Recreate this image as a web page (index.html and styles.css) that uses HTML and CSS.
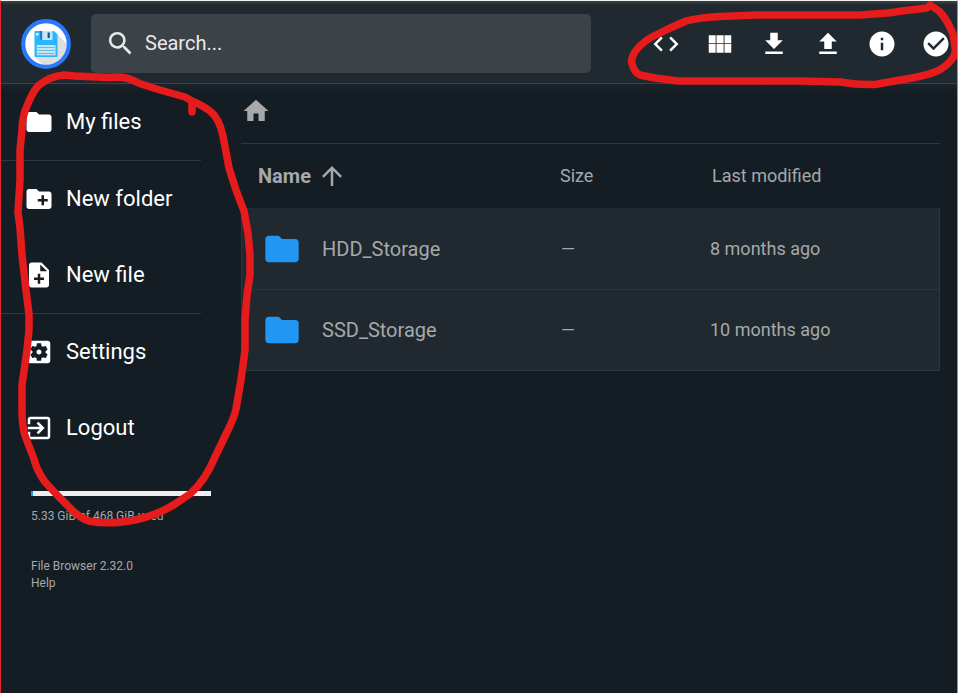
FILE: index.html
```html
<!DOCTYPE html>
<html lang="en">
<head>
<meta charset="utf-8">
<title>File Browser</title>
<link rel="stylesheet" href="styles.css">
</head>
<body>
<div class="app">
  <header class="header">
    <svg class="logo" viewBox="0 0 50 50">
      <circle cx="25" cy="25" r="23" fill="#fff"/>
      <path d="M36 15 L46 25 A21 21 0 0 1 21 45.500 L14 38 Z" fill="#dedede"/>
      <circle cx="25" cy="25" r="22.800" fill="none" stroke="#2979ff" stroke-width="4.200"/>
      <path d="M14.500 12h18.500l3.500 3.500v21.500a1 1 0 0 1-1 1h-21a1 1 0 0 1-1-1v-24a1 1 0 0 1 1-1z" fill="#29b6ff"/>
      <path d="M19 12h12.500v8a1 1 0 0 1-1 1H20a1 1 0 0 1-1-1z" fill="#c4e6f5"/>
      <path d="M19 12h2.200v9H20a1 1 0 0 1-1-1z" fill="#1583c4"/>
      <path d="M26.600 13.500h2.200v5.500h-2.200z" fill="#0d5c91"/>
      <path d="M15 14h2.500v2.500H15z" fill="#e8faff"/>
      <path d="M15.800 26h18.700v10.300H15.800z" fill="#c4e6f5"/>
      <path d="M16.500 28.500h17M16.500 31.500h17M16.500 34.500h17" stroke="#6cb8de"/>
    </svg>
    <div class="search">
      <svg class="icon" viewBox="0 0 24 24"><path d="M15.500 14h-.79l-.28-.27A6.471 6.471 0 0 0 16 9.500 6.500 6.500 0 1 0 9.500 16c1.610 0 3.090-.59 4.230-1.570l.27.28v.79l5 4.990L20.490 19l-4.990-5zm-6 0C7.010 14 5 11.990 5 9.500S7.010 5 9.500 5 14 7.010 14 9.500 11.990 14 9.500 14z"/></svg>
      <span>Search...</span>
    </div>
    <div class="actions">
      <svg class="icon" viewBox="0 0 24 24"><path d="M9.400 16.600 4.800 12l4.600-4.600L8 6l-6 6 6 6 1.400-1.400zm5.200 0 4.600-4.600-4.600-4.600L16 6l6 6-6 6-1.400-1.400z"/></svg>
      <svg class="icon" viewBox="0 0 24 24"><path d="M3 5h5.500v6.300H3zM9.200 5h5.700v6.300H9.200zM15.600 5H21v6.300h-5.400zM3 12h5.500v7H3zM9.200 12h5.700v7H9.200zM15.600 12H21v7h-5.400z"/></svg>
      <svg class="icon" viewBox="0 0 24 24"><path d="M19 9h-4V3H9v6H5l7 7 7-7zM5 18v2h14v-2H5z"/></svg>
      <svg class="icon" viewBox="0 0 24 24"><path d="M9 16h6v-6h4l-7-7-7 7h4zm-4 2h14v2H5z"/></svg>
      <svg class="icon" viewBox="0 0 24 24"><path d="M12 2C6.480 2 2 6.480 2 12s4.480 10 10 10 10-4.480 10-10S17.520 2 12 2zm1 15h-2v-6h2v6zm0-8h-2V7h2v2z"/></svg>
      <svg class="icon" viewBox="0 0 24 24"><path d="M12 2C6.480 2 2 6.480 2 12s4.480 10 10 10 10-4.480 10-10S17.520 2 12 2zm-2 15-5-5 1.410-1.410L10 14.170l7.590-7.590L19 8l-9 9z"/></svg>
    </div>
  </header>
  <div class="body">
    <nav class="sidebar">
      <div class="group">
        <a class="item"><svg class="icon" viewBox="0 0 24 24"><path d="M10 4H4c-1.100 0-1.990.9-1.990 2L2 18c0 1.100.9 2 2 2h16c1.100 0 2-.9 2-2V8c0-1.100-.9-2-2-2h-8l-2-2z"/></svg><span>My files</span></a>
      </div>
      <div class="group">
        <a class="item"><svg class="icon" viewBox="0 0 24 24"><path d="M20 6h-8l-2-2H4c-1.110 0-1.990.89-1.990 2L2 18c0 1.110.89 2 2 2h16c1.110 0 2-.89 2-2V8c0-1.110-.89-2-2-2zm-1 8h-3v3h-2v-3h-3v-2h3V9h2v3h3v2z"/></svg><span>New folder</span></a>
        <a class="item"><svg class="icon" viewBox="0 0 24 24"><path d="M14 2H6c-1.100 0-1.990.9-1.990 2L4 20c0 1.100.89 2 1.990 2H18c1.100 0 2-.9 2-2V8l-6-6zm2 14h-3v3h-2v-3H8v-2h3v-3h2v3h3v2zm-3-7V3.500L18.500 9H13z"/></svg><span>New file</span></a>
      </div>
      <div class="group">
        <a class="item"><svg class="icon" viewBox="0 0 24 24"><path d="M12 10c-1.100 0-2 .9-2 2s.9 2 2 2 2-.9 2-2-.9-2-2-2zm7-7H5c-1.110 0-2 .9-2 2v14c0 1.100.89 2 2 2h14c1.110 0 2-.9 2-2V5c0-1.100-.89-2-2-2zm-1.750 9c0 .23-.02.46-.05.68l1.480 1.160c.13.110.17.3.08.45l-1.400 2.420c-.09.15-.27.21-.43.15l-1.740-.7c-.36.28-.76.51-1.180.69l-.26 1.850c-.03.17-.18.3-.35.3h-2.800c-.17 0-.32-.13-.35-.29l-.26-1.850c-.43-.18-.82-.41-1.180-.69l-1.740.7c-.16.06-.34 0-.43-.15l-1.400-2.420a.35.35 0 0 1 .08-.45l1.480-1.160c-.03-.23-.05-.46-.05-.69s.02-.46.05-.68l-1.480-1.160a.35.35 0 0 1-.08-.45l1.400-2.420c.09-.15.27-.21.43-.15l1.740.7c.36-.28.76-.51 1.180-.69l.26-1.850c.03-.17.18-.3.35-.3h2.800c.17 0 .32.13.35.29l.26 1.850c.43.18.82.41 1.180.69l1.740-.7c.16-.06.34 0 .43.15l1.400 2.420c.09.15.05.34-.08.45l-1.480 1.160c.03.23.05.46.05.69z"/></svg><span>Settings</span></a>
        <a class="item"><svg class="icon" viewBox="0 0 24 24"><path d="M10.090 15.590 11.500 17l5-5-5-5-1.410 1.410L12.670 11H3v2h9.670l-2.580 2.590zM19 3H5c-1.110 0-2 .9-2 2v4h2V5h14v14H5v-4H3v4c0 1.100.89 2 2 2h14c1.100 0 2-.9 2-2V5c0-1.100-.9-2-2-2z"/></svg><span>Logout</span></a>
      </div>
      <div class="meter"><div class="meter-fill"></div></div>
      <p class="usage">5.33 GiB of 468 GiB used</p>
      <p class="credits">File Browser 2.32.0<br>Help</p>
    </nav>
    <main class="main">
      <div class="crumbs"><svg class="icon" viewBox="0 0 24 24"><path d="M10 20v-6h4v6h5v-8h3L12 3 2 12h3v8z"/></svg></div>
      <div class="row head">
        <div class="name">Name<svg class="arrow" viewBox="0 0 24 24"><path d="m4 12 1.410 1.410L11 7.830V20h2V7.830l5.580 5.590L20 12l-8-8-8 8z"/></svg></div>
        <span class="size">Size</span>
        <span class="date">Last modified</span>
      </div>
      <div class="list">
        <div class="row">
          <svg class="folder" viewBox="0 0 24 24"><path d="M10 4H4c-1.100 0-1.990.9-1.990 2L2 18c0 1.100.9 2 2 2h16c1.100 0 2-.9 2-2V8c0-1.100-.9-2-2-2h-8l-2-2z"/></svg>
          <span class="title">HDD_Storage</span><span class="size">—</span><span class="date">8 months ago</span>
        </div>
        <div class="row">
          <svg class="folder" viewBox="0 0 24 24"><path d="M10 4H4c-1.100 0-1.990.9-1.990 2L2 18c0 1.100.9 2 2 2h16c1.100 0 2-.9 2-2V8c0-1.100-.9-2-2-2h-8l-2-2z"/></svg>
          <span class="title">SSD_Storage</span><span class="size">—</span><span class="date">10 months ago</span>
        </div>
      </div>
    </main>
  </div>
  <svg class="marks" viewBox="0 0 958 693">
    <path d="M192 112V101L185 97 160 90 141 84Q127 77 119 77L108 77.500 75 76 64 75Q50 76 38 86 32 93 27 106 22 117 22 130L20 150V180L18 212 20 228 22 255 26 290 29 314V330L27 350 22 385 22 410Q22 430 27 441L34 459Q36 469 45 482L59 497 71 509Q80 518 89 521 108 525 135 520 158 515 175 504L190 494Q205 481 215 457L228 430 Q234 418 236 409L241 380 245 350V320L247 295 250 275V255L248 233 244 211 236 190 229 168 223 136Q219 118 211 112 204 106 192 101"/>
    <path d="M927 8 902 11 888 13 860 15H755L720 16.500Q697 18 686 21L668 29 650 38Q632 50 631.500 62 634 73 640 75L655 78 678 81H800L840 82Q858 85 875 84.500L906 79Q931 75 941 69 955 60 955.500 50L953 34Q947 19 939 11L930 5"/>
  </svg>
</div>
</body>
</html>
```
FILE: styles.css
```css
* { box-sizing: border-box; }
body { margin: 0; font-family: Roboto, sans-serif; color: #a6a8aa; background: #141d24; }
p { margin: 0; }
svg { display: block; fill: currentColor; flex: none; }
.app { position: relative; width: 958px; height: 693px; overflow: hidden; border-left: 1px solid #e5222f; border-right: 1px solid #8e969c; border-top: 1px solid #f3f5f2; }
.header { height: 83px; display: flex; align-items: center; padding: 3px 0 0 20px; background: linear-gradient(#3d4242, #20292f 4px); border-bottom: 1px solid #3b4247; color: #fff; }
.logo { width: 50px; height: 50px; }
.icon { width: 31px; height: 31px; }
.search { width: 500px; height: 59px; margin: 0 0 1px 20px; padding-left: 14px; border-radius: 5px; background: #3c4348; display: flex; align-items: center; gap: 9px; font-size: 20px; color: #e8e9e9; }
.actions { display: flex; gap: 24px; margin: 1px 0 0 60px; }
.actions .icon { width: 30px; height: 30px; }
.body { display: flex; height: 609px; background: linear-gradient(#1b242b, #141d24 8px); }
.sidebar { width: 240px; flex: none; }
.group { width: 200px; border-bottom: 1px solid #30383e; }
.group:nth-child(3) { border: 0; }
.item { height: 76px; display: flex; align-items: center; gap: 12px; padding-left: 23px; font-size: 22px; color: #fff; }
.item .icon { width: 30px; height: 30px; }
.item span { padding-bottom: 2px; }
.meter { width: 180px; height: 5px; margin: 25px 0 0 30px; background: #eee; }
.meter-fill { width: 2px; height: 5px; background: #2196f3; }
.usage, .credits { margin-left: 30px; font-size: 12px; line-height: 17px; white-space: nowrap; }
.usage { margin-top: 12px; }
.credits { margin-top: 33px; }
.main { width: 699px; }
.crumbs { height: 60px; padding: 12px 0 0; border-bottom: 1px solid #30383e; }
.crumbs .icon { width: 30px; height: 30px; }
.row { display: flex; align-items: center; font-size: 18px; }
.head { height: 64px; padding-left: 17px; }
.name { width: 302px; display: flex; align-items: center; gap: 6px; font-size: 20px; font-weight: 700; }
.arrow { width: 30px; height: 30px; }
.size { width: 149px; padding-bottom: 2px; }
.head .size { width: 152px; }
.date { padding-bottom: 2px; }
.list { border: 1px solid #2e363c; border-top-color: #232c32; background: #20292f; }
.list .row { height: 80px; padding-left: 20px; }
.list .row + .row { height: 81px; border-top: 1px solid #2e363c; }
.folder { width: 40px; height: 40px; color: #2196f3; }
.title { width: 239px; margin-left: 20px; font-size: 20px; }
.marks { position: absolute; left: -1px; top: -1px; width: 958px; height: 693px; fill: none; stroke: #e61b1b; stroke-width: 7.500px; stroke-linecap: round; stroke-linejoin: round; }
```
